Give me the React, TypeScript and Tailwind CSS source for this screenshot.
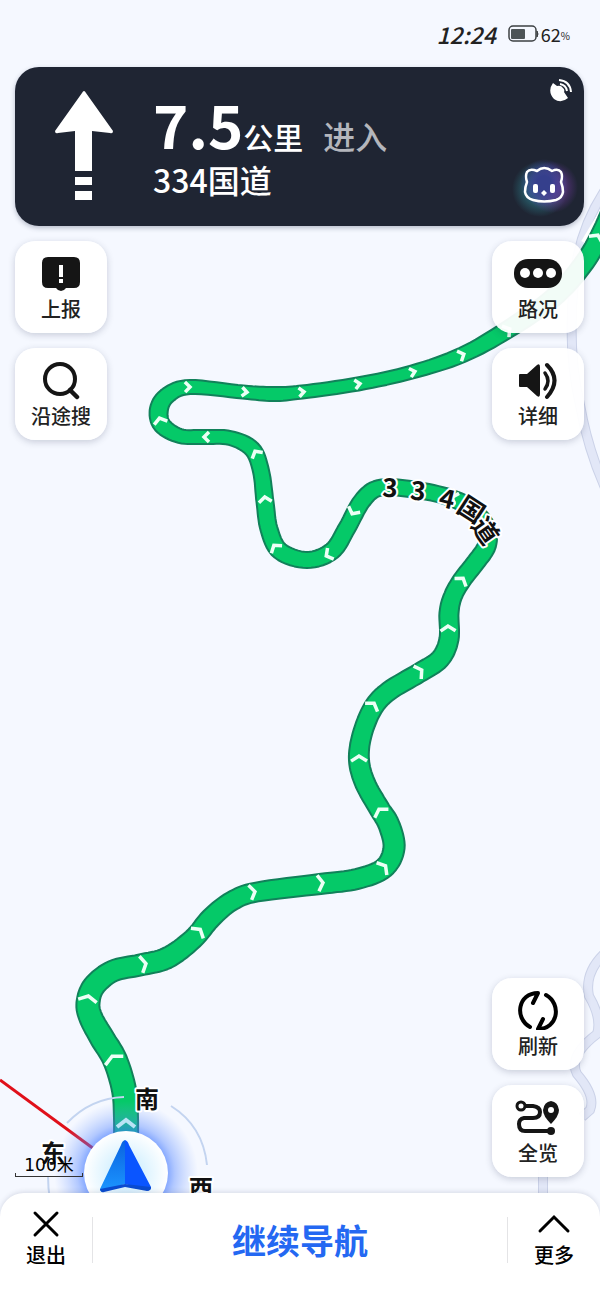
import React from "react";

type Point = { x: number; y: number; w: number };

// Centre line of the route: x, y and road width, from the car to the horizon
const routePoints: number[][] = [
  [126, 1150, 26],
  [126, 1118, 26],
  [124, 1090, 26],
  [115, 1060, 26],
  [102, 1038, 26],
  [91, 1018, 25],
  [88, 1003, 25],
  [94, 986, 24],
  [113, 971, 23],
  [140, 965, 23],
  [167, 958, 23],
  [193, 939, 22],
  [211, 918, 22],
  [232, 901, 21],
  [257, 892, 21],
  [320, 884, 22],
  [357, 879, 22],
  [384, 868, 22],
  [394, 848, 23],
  [389, 825, 23],
  [379, 808, 22],
  [365, 783, 22],
  [359, 760, 22],
  [362, 735, 21],
  [373, 708, 21],
  [389, 691, 21],
  [419, 673, 21],
  [440, 659, 21],
  [449, 639, 21],
  [449, 613, 21],
  [453, 596, 20],
  [462, 580, 20],
  [476, 562, 20],
  [487, 545, 20],
  [486, 526, 19],
  [469, 507, 19],
  [445, 496, 18],
  [410, 489, 18],
  [379, 488, 18],
  [362, 501, 19],
  [347, 528, 19],
  [332, 551, 19],
  [307, 560, 18],
  [280, 551, 19],
  [269, 529, 19],
  [265, 502, 19],
  [261, 471, 18],
  [252, 449, 18],
  [230, 438, 16],
  [203, 437, 16],
  [180, 436, 16],
  [162, 425, 19],
  [159, 409, 20],
  [168, 395, 18],
  [190, 387, 16],
  [243, 392, 15],
  [273, 394, 16],
  [302, 392, 15],
  [358, 384, 15],
  [412, 372, 15],
  [462, 355, 17],
  [507, 330, 19],
  [553, 298, 20],
  [582, 266, 21],
  [600, 236, 21],
  [616, 200, 21],
];

const routeArrows: number[][] = [
  [113, 1058],
  [88, 998],
  [144, 964],
  [199, 931],
  [253, 892],
  [321, 883],
  [384, 867],
  [380, 811],
  [359, 758],
  [373, 705],
  [420, 671],
  [448, 628],
  [462, 580],
  [454, 498],
  [353, 512],
  [328, 555],
  [275, 547],
  [265, 499],
  [256, 453],
  [206, 437],
  [160, 420],
  [188, 387],
  [245, 392],
  [302, 392],
  [358, 384],
  [413, 372],
  [462, 355],
  [508, 330],
  [597, 237],
];

const roadLabel = [
  { char: "3", x: 390, y: 488, angle: 2 },
  { char: "3", x: 418, y: 491, angle: 6 },
  { char: "4", x: 447, y: 499, angle: 14 },
  { char: "国", x: 471, y: 510, angle: 33 },
  { char: "道", x: 485, y: 531, angle: 55 },
];

const roads = [
  "M612 180 Q578 226 574 282 Q567 350 580 405 Q588 450 606 490",
  "M606 952 Q584 972 589 996 Q602 1018 597 1034 Q568 1056 577 1074 Q596 1096 590 1110 L582 1117",
  "M543 1160 V1220",
];

// Catmull-Rom interpolation through the route points
const smooth = (points: number[][], steps: number): Point[] => {
  const result: Point[] = [];
  for (let i = 0; i < points.length - 1; i++) {
    const p0 = points[Math.max(i - 1, 0)];
    const p1 = points[i];
    const p2 = points[i + 1];
    const p3 = points[Math.min(i + 2, points.length - 1)];
    for (let s = 0; s < steps; s++) {
      const t = s / steps;
      const [x, y, w] = [0, 1, 2].map(
        (k) =>
          0.5 *
          (2 * p1[k] +
            (p2[k] - p0[k]) * t +
            (2 * p0[k] - 5 * p1[k] + 4 * p2[k] - p3[k]) * t * t +
            (3 * p1[k] - p0[k] - 3 * p2[k] + p3[k]) * t * t * t)
      );
      result.push({ x, y, w });
    }
  }
  return result;
};

const route = smooth(routePoints, 8);

const headingAt = (i: number) => {
  const a = route[Math.max(i - 2, 0)];
  const b = route[Math.min(i + 2, route.length - 1)];
  return Math.atan2(b.y - a.y, b.x - a.x);
};

const outline = (() => {
  const left: string[] = [];
  const right: string[] = [];
  route.forEach((p, i) => {
    const h = headingAt(i);
    const dx = (Math.sin(h) * (p.w - 2)) / 2;
    const dy = (-Math.cos(h) * (p.w - 2)) / 2;
    left.push(`${(p.x + dx).toFixed(1)} ${(p.y + dy).toFixed(1)}`);
    right.unshift(`${(p.x - dx).toFixed(1)} ${(p.y - dy).toFixed(1)}`);
  });
  return `M${left.join("L")}L${right.join("L")}Z`;
})();

const nearest = (x: number, y: number) => {
  let best = 0;
  route.forEach((p, i) => {
    const b = route[best];
    if (Math.hypot(p.x - x, p.y - y) < Math.hypot(b.x - x, b.y - y)) best = i;
  });
  return best;
};

const RouteMap: React.FC = () => (
  <svg
    className="absolute inset-0 h-full w-full"
    viewBox="0 0 600 1300"
    preserveAspectRatio="xMidYMax slice"
    aria-hidden="true"
  >
    <defs>
      <radialGradient id="glow">
        <stop offset="0.5" stopColor="#2f6bff" stopOpacity="0.75" />
        <stop offset="0.68" stopColor="#4c80ff" stopOpacity="0.4" />
        <stop offset="1" stopColor="#7aa2ff" stopOpacity="0" />
      </radialGradient>
      <radialGradient id="disc">
        <stop offset="0.3" stopColor="#d3f0ff" />
        <stop offset="1" stopColor="#ffffff" />
      </radialGradient>
      <linearGradient id="arrowLeft" x1="0" y1="0" x2="0" y2="1">
        <stop offset="0" stopColor="#0a62e0" />
        <stop offset="1" stopColor="#1c96ff" />
      </linearGradient>
    </defs>

    {/* Side roads */}
    {roads.map((d) => (
      <g key={d} fill="none">
        <path d={d} stroke="#cbd2e8" strokeWidth="10" />
        <path d={d} stroke="#e2e7f7" strokeWidth="8" />
      </g>
    ))}
    <path d="M583 242 L606 204" stroke="#ffffff" strokeWidth="4" />

    {/* Route */}
    <path d={outline} fill="#05c968" stroke="#11815a" strokeWidth="2" strokeLinejoin="round" />
    {routeArrows.map(([x, y]) => {
      const i = nearest(x, y);
      const angle = (headingAt(i) * 180) / Math.PI;
      const s = (route[i].w - 6) / 2;
      return (
        <path
          key={`${x}-${y}`}
          d={`M-3 ${-s}L2 0L-3 ${s}`}
          transform={`translate(${x} ${y}) rotate(${angle})`}
          fill="none"
          stroke="#ecfff5"
          strokeWidth="3.5"
        />
      );
    })}

    {/* Compass */}
    <g fill="none" stroke="#c3d4f0" strokeWidth="2">
      <path d="M67 1123 Q91 1098 124 1097" />
      <path d="M171 1106 Q203 1126 207 1165" />
      <path d="M48 1176 Q48 1188 50 1200" />
    </g>
    <path d="M0 1080 L94 1149" stroke="#e0101a" strokeWidth="3" />
    <circle cx="126" cy="1173" r="72" fill="url(#glow)" />
    <path d="M117 1127 L126 1120 L135 1127" fill="none" stroke="#b9e3f5" strokeWidth="4" />
    <circle cx="126" cy="1173" r="42" fill="url(#disc)" />
    <path d="M125 1140 Q122 1141 121 1145 L100 1189 Q100 1193 104 1191 L125 1184 Z" fill="url(#arrowLeft)" />
    <path d="M125 1140 Q128 1141 129 1145 L151 1187 Q151 1191 147 1190 L125 1184 Z" fill="#0a55ff" />
    <path d="M100 1189 Q101 1193 104 1192 L125 1187 L147 1191 Q151 1191 151 1187 L125 1184 Z" fill="#0a4bd0" />

    <g
      fill="#111111"
      stroke="#ffffff"
      strokeWidth="4"
      strokeLinejoin="round"
      textAnchor="middle"
      className="font-['Noto_Sans_CJK_SC',sans-serif] text-[24px] font-bold [paint-order:stroke]"
    >
      <text x="147" y="1108">南</text>
      <text x="53" y="1162">东</text>
      <text x="201" y="1197">西</text>
    </g>
    <g
      fill="#111111"
      stroke="#ffffff"
      strokeWidth="4"
      strokeLinejoin="round"
      textAnchor="middle"
      className="font-['Noto_Sans_CJK_SC',sans-serif] text-[26px] font-bold [paint-order:stroke]"
    >
      {roadLabel.map(({ char, x, y, angle }) => (
        <text key={x} y="9" transform={`translate(${x} ${y}) rotate(${angle})`}>
          {char}
        </text>
      ))}
    </g>
  </svg>
);

const BatteryIcon = () => (
  <svg width="31" height="18" viewBox="0 0 31 18" fill="none" aria-hidden="true">
    <rect x="1" y="1" width="27" height="15" rx="4" stroke="#3c4043" strokeWidth="1.5" />
    <rect x="3" y="4" width="14" height="10" rx="1" fill="#4d5457" />
    <path d="M29 6 Q31 9 29 12 Z" fill="#3c4043" stroke="#3c4043" />
  </svg>
);

const StraightIcon = () => (
  <svg width="58" height="110" viewBox="0 0 58 110" fill="#ffffff" aria-hidden="true">
    <path d="M29 0 Q30 0 31 2 L58 40 Q58 43 55 42 L37 40 V80 H20 V40 L3 42 Q0 43 0 40 L27 2 Q28 0 29 0Z" />
    <path d="M20 86 H37 V94 H20Z M20 100 H37 V109 H20Z" />
  </svg>
);

const SatelliteIcon = () => (
  <svg width="23" height="23" viewBox="0 0 23 23" fill="none" aria-hidden="true">
    <path d="M4 4 L8 7 Q12 6 14 9 Q16 11 15 13 L19 19 Q12 25 5 20 Q-2 12 4 4Z" fill="#ffffff" />
    <path d="M10 1 Q21 2 22 13" stroke="#ffffff" strokeWidth="2" />
    <path d="M11 5 Q17 6 18 12" stroke="#ffffff" strokeWidth="2" />
  </svg>
);

const MascotIcon = () => (
  <svg width="80" height="80" viewBox="0 0 80 80" fill="none" aria-hidden="true">
    <defs>
      <radialGradient id="teal">
        <stop offset="0.3" stopColor="#2f8f9c" stopOpacity="0.7" />
        <stop offset="1" stopColor="#2f8f9c" stopOpacity="0" />
      </radialGradient>
      <radialGradient id="violet">
        <stop offset="0.2" stopColor="#7a3a96" stopOpacity="0.9" />
        <stop offset="1" stopColor="#6a3aa0" stopOpacity="0" />
      </radialGradient>
      <radialGradient id="indigo">
        <stop offset="0.3" stopColor="#353f8c" />
        <stop offset="1" stopColor="#3b46a0" stopOpacity="0" />
      </radialGradient>
    </defs>
    <circle cx="36" cy="43" r="28" fill="url(#teal)" />
    <circle cx="48" cy="41" r="26" fill="url(#violet)" />
    <circle cx="40" cy="37" r="24" fill="url(#indigo)" />
    <path
      d="M33 25 Q26 22 23 26 Q21 30 23 36 Q21 41 21 46 Q22 52 29 54 Q40 57 52 54 Q58 52 59 46 Q59 41 57 36 Q59 30 57 26 Q54 22 48 25 Q40 19 33 25Z"
      stroke="#ffffff"
      strokeWidth="2.5"
      strokeLinejoin="round"
    />
    <rect x="29" y="38" width="5" height="9" rx="2" fill="#ffffff" />
    <rect x="46" y="38" width="5" height="9" rx="2" fill="#ffffff" />
    <path d="M40 44 L43 47 L40 50 L37 47Z" fill="#ffffff" />
  </svg>
);

const ReportIcon = () => (
  <svg width="40" height="40" viewBox="0 0 40 40" aria-hidden="true">
    <path d="M7 4 H33 Q39 4 39 10 V29 Q39 35 33 35 H25 Q23 38 20 38 Q17 38 15 35 H7 Q1 35 1 29 V10 Q1 4 7 4Z" fill="#151515" />
    <path d="M18 12 H22 V24 H18Z M18 26 H22 V30 H18Z" fill="#ffffff" />
  </svg>
);

const SearchIcon = () => (
  <svg width="40" height="40" viewBox="0 0 40 40" fill="none" stroke="#151515" aria-hidden="true">
    <circle cx="19" cy="19" r="15" strokeWidth="4" />
    <path d="M29 30 L36 37" strokeWidth="4.5" strokeLinecap="round" />
  </svg>
);

const TrafficIcon = () => (
  <svg width="50" height="40" viewBox="0 0 50 40" aria-hidden="true">
    <rect x="1" y="6" width="48" height="29" rx="14" fill="#151515" />
    <g fill="#ffffff">
      <circle cx="12" cy="20" r="5" />
      <circle cx="25" cy="20" r="5" />
      <circle cx="38" cy="20" r="5" />
    </g>
  </svg>
);

const VolumeIcon = () => (
  <svg width="40" height="40" viewBox="0 0 40 40" fill="none" aria-hidden="true">
    <path d="M2 14 H9 L19 5 Q22 3 22 7 V34 Q22 38 19 36 L9 27 H2 Q1 27 1 26 V15 Q1 14 2 14Z" fill="#151515" />
    <path d="M27 13 Q33 21 27 29" stroke="#151515" strokeWidth="3.5" strokeLinecap="round" />
    <path d="M29 5 Q44 20 29 37" stroke="#151515" strokeWidth="4" strokeLinecap="round" />
  </svg>
);

const RefreshIcon = () => (
  <svg
    width="40"
    height="40"
    viewBox="0 0 40 40"
    fill="none"
    stroke="#000000"
    strokeWidth="4"
    strokeLinecap="round"
    strokeLinejoin="round"
    aria-hidden="true"
  >
    <path d="M12 37 C-4 28 0 3 20 3 L15 13" />
    <path d="M28 5 C44 14 40 39 20 39 L25 29" />
  </svg>
);

const OverviewIcon = () => (
  <svg width="46" height="40" viewBox="0 0 46 40" fill="none" aria-hidden="true">
    <path d="M9 9 H18 Q25 10 25 15 Q25 21 18 21 H9 Q4 22 4 27 Q4 34 10 34 H35" stroke="#151515" strokeWidth="4" />
    <circle cx="6" cy="9" r="4" fill="#ffffff" stroke="#151515" strokeWidth="3" />
    <circle cx="36" cy="34" r="4" fill="#151515" />
    <path d="M36 27 Q28 19 28 13 Q29 5 36 4 Q43 5 44 13 Q44 19 36 27Z" fill="#151515" />
    <circle cx="36" cy="13" r="3" fill="#ffffff" />
  </svg>
);

const MapButton: React.FC<{ label: string; icon: React.ReactNode }> = ({ label, icon }) => (
  <button
    type="button"
    className="flex size-[92px] flex-col items-center rounded-[20px] bg-white/95 pt-3 text-[20px] font-medium leading-7 text-[#222] shadow-[0_2px_7px_rgba(40,50,80,0.22)]"
  >
    {icon}
    <span className="mt-[2px]">{label}</span>
  </button>
);

const App: React.FC = () => {
  return (
    <div className="relative flex min-h-screen flex-col overflow-hidden bg-[#f5f8ff] font-['Noto_Sans_CJK_SC',sans-serif]">
      <RouteMap />

      {/* Status bar */}
      <header className="relative flex h-[67px] items-center justify-end pr-[30px] text-[#222]">
        <span className="mr-3 text-[23px] font-medium italic leading-8">12:24</span>
        <BatteryIcon />
        <span className="ml-[2px] text-[18px] leading-8">62</span>
        <span className="pt-1 text-[10px]">%</span>
      </header>

      {/* Next manoeuvre */}
      <section className="relative ml-[15px] mr-4 flex h-[159px] rounded-[24px] bg-[#1f2533] pl-10 text-white shadow-[0_2px_5px_rgba(40,50,80,0.3)]">
        <div className="pt-6">
          <StraightIcon />
        </div>
        <div className="ml-10 pt-6">
          <p className="flex h-16 items-baseline leading-[64px]">
            <strong className="text-[60px] font-bold">7.5</strong>
            <span className="text-[30px] font-medium">公里</span>
            <span className="ml-5 text-[32px] font-medium text-[#b4b6bc]">进入</span>
          </p>
          <p className="text-[32px] font-medium leading-[48px]">334国道</p>
        </div>
        <div className="absolute right-3 top-3">
          <SatelliteIcon />
        </div>
        <div className="absolute bottom-0 right-0">
          <MascotIcon />
        </div>
      </section>

      {/* Map controls */}
      <main className="relative flex flex-1 flex-col justify-between pb-4 pl-[15px] pr-4 pt-[15px]">
        <div className="flex justify-between">
          <div className="flex flex-col gap-[15px]">
            <MapButton label="上报" icon={<ReportIcon />} />
            <MapButton label="沿途搜" icon={<SearchIcon />} />
          </div>
          <div className="flex flex-col gap-[15px]">
            <MapButton label="路况" icon={<TrafficIcon />} />
            <MapButton label="详细" icon={<VolumeIcon />} />
          </div>
        </div>
        <div className="flex items-end justify-between">
          <div className="w-[68px] text-center font-['DejaVu_Sans','Noto_Sans_CJK_SC',sans-serif] text-[17px] leading-4 text-black">
            100米
            <div className="h-1 border-x border-b border-[#333]" />
          </div>
          <div className="flex flex-col gap-[15px]">
            <MapButton label="刷新" icon={<RefreshIcon />} />
            <MapButton label="全览" icon={<OverviewIcon />} />
          </div>
        </div>
      </main>

      {/* Bottom bar */}
      <footer className="relative flex h-[107px] items-start rounded-t-[24px] bg-white pt-4 text-black shadow-[0_-1px_5px_rgba(40,50,80,0.15)]">
        <button type="button" className="flex w-[92px] flex-col items-center text-[20px] font-medium leading-8">
          <svg width="30" height="30" viewBox="0 0 30 30" stroke="#000000" strokeWidth="3" strokeLinecap="round" aria-hidden="true">
            <path d="M4 4 L26 26 M26 4 L4 26" />
          </svg>
          退出
        </button>
        <button
          type="button"
          className="mt-2 h-[46px] flex-1 border-x border-[#e4e4e6] text-[34px] font-bold leading-[44px] text-[#2468f2]"
        >
          继续导航
        </button>
        <button type="button" className="flex w-[92px] flex-col items-center text-[20px] font-medium leading-8">
          <svg width="34" height="30" viewBox="0 0 34 30" fill="none" stroke="#000000" strokeWidth="3" strokeLinecap="round" aria-hidden="true">
            <path d="M3 22 L17 8 L31 22" />
          </svg>
          更多
        </button>
      </footer>
    </div>
  );
};

export default App;
